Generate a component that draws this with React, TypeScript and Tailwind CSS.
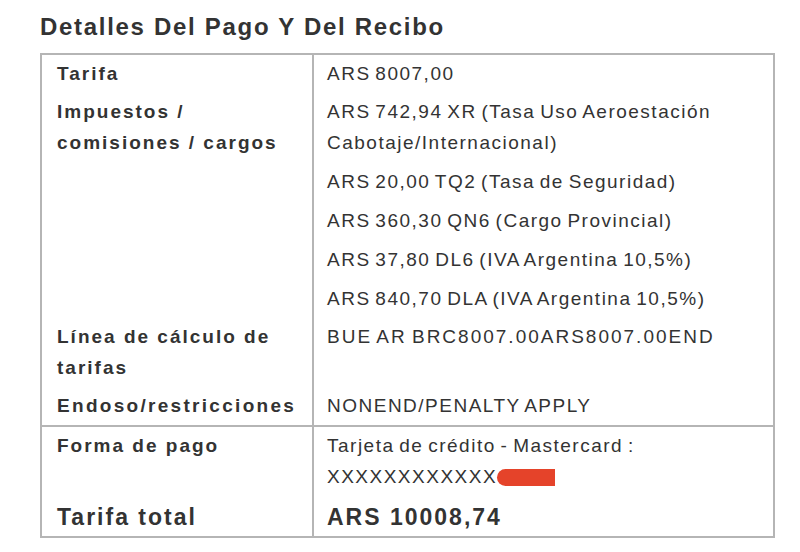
import React from "react";

const labelBase = "pl-[15px] pr-2 pt-[3px] pb-[4px] border-r-2 border-[#b5b5b5] font-bold";
const label = labelBase + " tracking-[2px]";
const valueBase = "pl-[13px] pr-3 pt-[3px] pb-[4px] [word-spacing:-2px]";
const value = valueBase + " tracking-[1.5px]";

export default function App() {
  return (
    <div
      className="bg-white w-[800px] h-[552px] pl-[40px] pt-[11px] text-[#333333]"
      style={{ fontFamily: '"Liberation Sans", Arial, sans-serif' }}
    >
      <h2 className="text-[24px] leading-[32px] font-bold tracking-[1.7px] mb-[10px]">
        Detalles Del Pago Y Del Recibo
      </h2>
      <div className="w-[735px] border-2 border-[#b5b5b5] text-[19px] leading-[31px]">
        <div className="grid grid-cols-[272px_1fr] border-b-2 border-[#b5b5b5]">
          <div className={label}>Tarifa</div>
          <div className={value}>ARS 8007,00</div>

          <div className={label}>
            Impuestos /<br />
            comisiones / cargos
          </div>
          <div className={value + " flex flex-col gap-[8px]"}>
            <p>
              ARS 742,94 XR (Tasa Uso Aeroestación
              <br />
              Cabotaje/Internacional)
            </p>
            <p>ARS 20,00 TQ2 (Tasa de Seguridad)</p>
            <p>ARS 360,30 QN6 (Cargo Provincial)</p>
            <p>ARS 37,80 DL6 (IVA Argentina 10,5%)</p>
            <p>ARS 840,70 DLA (IVA Argentina 10,5%)</p>
          </div>

          <div className={label}>
            Línea de cálculo de
            <br />
            tarifas
          </div>
          <div className={valueBase + " tracking-[2px]"}>BUE AR BRC8007.00ARS8007.00END</div>

          <div className={labelBase + " tracking-[2.3px]"}>Endoso/restricciones</div>
          <div className={value}>NONEND/PENALTY APPLY</div>
        </div>

        <div className="grid grid-cols-[272px_1fr]">
          <div className={label}>Forma de pago</div>
          <div className={value}>
            Tarjeta de crédito - Mastercard :
            <br />
            XXXXXXXXXXXX
            <span className="inline-block align-[-3px] w-[58px] h-[17px] bg-[#e5432a] rounded-l-full rounded-tr-[9px]"></span>
          </div>

          <div className="pl-[15px] pr-2 pt-[3px] pb-[1px] border-r-2 border-[#b5b5b5] font-bold text-[23px] leading-[36px] tracking-[2px]">
            Tarifa total
          </div>
          <div className="pl-[13px] pr-3 pt-[3px] pb-[1px] font-bold text-[23px] leading-[36px] tracking-[2px]">
            ARS 10008,74
          </div>
        </div>
      </div>
    </div>
  );
}
